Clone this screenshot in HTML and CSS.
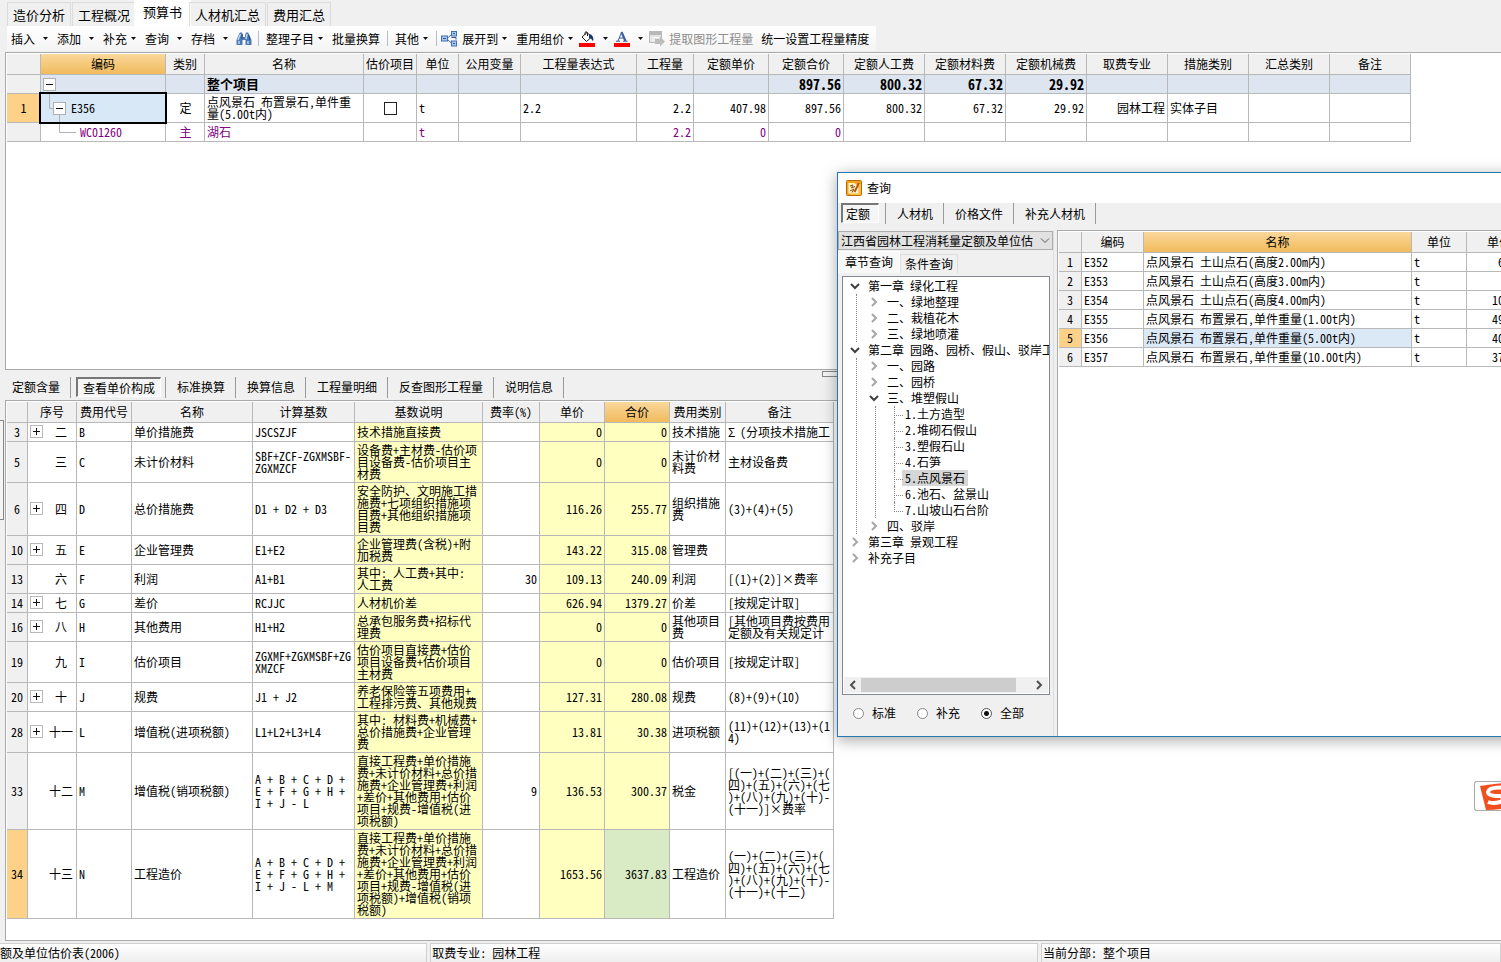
FILE: index.html
```html
<!DOCTYPE html>
<html lang="zh-CN">
<head>
<meta charset="utf-8">
<title>预算书</title>
<link rel="stylesheet" href="styles.css">
</head>
<body>
<svg class="defs" width="0" height="0" aria-hidden="true">
  <symbol id="caret" viewBox="0 0 6 3"><path d="M0 0H5L2.5 3Z" fill="#111"/></symbol>
  <symbol id="plus" viewBox="0 0 13 13"><rect x=".5" y=".5" width="12" height="12" fill="#fff" stroke="#b8b8b8"/><path d="M3 6.5H10M6.5 3V10" stroke="#111"/></symbol>
  <symbol id="open" viewBox="0 0 12 12"><path d="M2 4L6 8L10 4" fill="none" stroke="#404040" stroke-width="2"/></symbol>
  <symbol id="closed" viewBox="0 0 12 12"><path d="M4 2L8 6L4 10" fill="none" stroke="#a6a6a6" stroke-width="2"/></symbol>
</svg>

<nav class="page-tabs">
  <button>造价分析</button><button>工程概况</button><button class="active">预算书</button><button>人材机汇总</button><button>费用汇总</button>
</nav>

<div class="toolbar">
  <button class="roomy">插入<svg class="caret"><use href="#caret"/></svg></button>
  <button class="roomy">添加<svg class="caret"><use href="#caret"/></svg></button>
  <button>补充<svg class="caret"><use href="#caret"/></svg></button>
  <button class="roomy">查询<svg class="caret"><use href="#caret"/></svg></button>
  <button class="roomy">存档<svg class="caret"><use href="#caret"/></svg></button>
  <button class="find" aria-label="查找"><svg width="16" height="16" viewBox="0 0 16 16"><path d="M3 3L4 1.500H6L7 4V6H9V4L10 1.500H12L13 3L15.500 9V14H9.500V9H6.500V14H.5V9Z" fill="#4f79b5"/><path d="M4.500 3L2 9M11 3L10 8M3 10V13M12 10V13" stroke="#c5daf2" stroke-width="1.400"/><path d="M6 3V8M12.500 4L14 9" stroke="#234a85"/></svg></button>
  <span class="sep"></span>
  <button>整理子目<svg class="caret"><use href="#caret"/></svg></button>
  <button>批量换算</button>
  <span class="sep"></span>
  <button>其他<svg class="caret"><use href="#caret"/></svg></button>
  <span class="sep"></span>
  <button class="with-icon"><svg width="17" height="16" viewBox="0 0 17 16"><path d="M6 7.500L11 3M6 8L11 12.500" stroke="#4868a0" fill="none"/><rect x=".5" y="5" width="6" height="5" fill="#a9c9f3" stroke="#456fb3"/><rect x="10.500" y=".5" width="5" height="4.500" fill="#a9c9f3" stroke="#456fb3"/><rect x="10.500" y="10" width="5" height="5" fill="#a9c9f3" stroke="#456fb3"/><path d="M2 7.500H5M12 2.500H14M12 12.500H14M10.500 6.500H15V8.500" stroke="#2b5499" fill="none"/></svg>展开到<svg class="caret"><use href="#caret"/></svg></button>
  <button>重用组价<svg class="caret"><use href="#caret"/></svg></button>
  <button class="with-icon roomy" aria-label="填充颜色"><svg width="16" height="16" viewBox="0 0 16 16"><rect y="12" width="16" height="4" fill="#f00"/><path d="M3 6L8 1.500L12.500 6L7.500 10.500Z" fill="#fff" stroke="#222"/><path d="M6 4V1.500Q7 0 8.500 1.500V5" fill="none" stroke="#222"/><path d="M10 3Q15.500 4 14 10.500Q12.500 7 10 7Z" fill="#14366f"/></svg><svg class="caret"><use href="#caret"/></svg></button>
  <button class="with-icon roomy" aria-label="字体颜色"><svg width="16" height="16" viewBox="0 0 16 16"><rect y="12" width="16" height="4" fill="#f00"/><path d="M4 10L7.500 1.500" stroke="#3c5d9b" fill="none"/><path d="M7.500 1L11.500 10" stroke="#3c5d9b" stroke-width="2.200" fill="none"/><path d="M5 7H10M2 10.200H6M9 10.200H13.500" stroke="#3c5d9b" fill="none"/></svg><svg class="caret"><use href="#caret"/></svg></button>
  <button class="with-icon" disabled><svg width="16" height="16" viewBox="0 0 16 16"><rect x=".5" y=".5" width="12" height="11" fill="#e4e4e4" stroke="#bbb"/><rect width="13" height="4" fill="#b9b9b9"/><path d="M3 6.500H10M3 9H7" stroke="#fff"/><path d="M6 8H11V5.500L16 10.500L11 15.500V13H6Z" fill="#bdbdbd"/></svg>提取图形工程量</button>
  <button>统一设置工程量精度</button>
</div>

<main>
<section class="panel budget">
<table class="grid">
  <colgroup><col class="w34"><col class="w125"><col class="w39"><col class="w159"><col class="w53"><col class="w42"><col class="w62"><col class="w116"><col class="w57"><col class="w75"><col class="w75"><col class="w81"><col class="w81"><col class="w81"><col class="w81"><col class="w81"><col class="w81"><col class="w81"></colgroup>
  <thead><tr><th></th><th class="hot">编码</th><th>类别</th><th>名称</th><th>估价项目</th><th>单位</th><th>公用变量</th><th>工程量表达式</th><th>工程量</th><th>定额单价</th><th>定额合价</th><th>定额人工费</th><th>定额材料费</th><th>定额机械费</th><th>取费专业</th><th>措施类别</th><th>汇总类别</th><th>备注</th></tr></thead>
  <tbody>
  <tr class="total"><th></th><td class="branch"><div><svg width="26" height="18" viewBox="0 0 26 18"><rect x="2.500" y="3.500" width="12" height="12" fill="#fff" stroke="#b0b0b0"/><path d="M5 9.500H12" stroke="#111"/></svg></div></td><td></td><td class="label">整个项目</td><td></td><td></td><td></td><td></td><td></td><td></td><td class="num">897.56</td><td class="num">800.32</td><td class="num">67.32</td><td class="num">29.92</td><td></td><td></td><td></td><td></td></tr>
  <tr class="tall"><th class="hot-row">1</th><td class="branch current"><div><svg width="26" height="28" viewBox="0 0 26 28"><path d="M8.500 0V14.500H12M18.500 20V28" fill="none" stroke="#b0b0b0"/><rect x="12.500" y="8.500" width="12" height="12" fill="#fff" stroke="#b0b0b0"/><path d="M15 14.500H22" stroke="#111"/></svg>E356</div></td><td class="mid">定</td><td>点风景石 布置景石,单件重<br>量(5.00t内)</td><td class="mid"><input type="checkbox" aria-label="估价项目"></td><td>t</td><td></td><td>2.2</td><td class="num">2.2</td><td class="num">407.98</td><td class="num">897.56</td><td class="num">800.32</td><td class="num">67.32</td><td class="num">29.92</td><td class="num">园林工程</td><td>实体子目</td><td></td><td></td></tr>
  <tr class="material"><th></th><td class="branch"><div><svg width="35" height="18" viewBox="0 0 35 18"><path d="M18.500 0V9.500H35" fill="none" stroke="#b0b0b0"/></svg>WC01260</div></td><td class="mid">主</td><td>湖石</td><td></td><td>t</td><td></td><td></td><td class="num">2.2</td><td class="num">0</td><td class="num">0</td><td></td><td></td><td></td><td></td><td></td><td></td><td></td></tr>
  </tbody>
</table>
</section>

<div class="splitter"><span></span></div>

<nav class="flat-tabs">
  <span><button>定额含量</button></span><span class="pressed"><button>查看单价构成</button></span><span><button>标准换算</button></span><span><button>换算信息</button></span><span><button>工程量明细</button></span><span><button>反查图形工程量</button></span><span><button>说明信息</button></span>
</nav>

<section class="panel detail">
<table class="grid">
  <colgroup><col class="w21"><col class="w49"><col class="w55"><col class="w121"><col class="w102"><col class="w128"><col class="w57"><col class="w65"><col class="w65"><col class="w56"><col class="w108"></colgroup>
  <thead><tr><th></th><th>序号</th><th>费用代号</th><th>名称</th><th>计算基数</th><th>基数说明</th><th>费率(%)</th><th>单价</th><th class="hot">合价</th><th>费用类别</th><th>备注</th></tr></thead>
  <tbody>
  <tr><th>3</th><td class="seq"><div><svg class="plus"><use href="#plus"/></svg><b>二</b></div></td><td>B</td><td>单价措施费</td><td>JSCSZJF</td><td class="calc">技术措施直接费</td><td></td><td class="num calc">0</td><td class="num calc">0</td><td>技术措施</td><td><span class="full">Σ</span>(分项技术措施工</td></tr>
  <tr><th>5</th><td class="seq"><div><b>三</b></div></td><td>C</td><td>未计价材料</td><td>SBF+ZCF-ZGXMSBF-<br>ZGXMZCF</td><td class="calc">设备费+主材费-估价项<br>目设备费-估价项目主<br>材费</td><td></td><td class="num calc">0</td><td class="num calc">0</td><td>未计价材<br>料费</td><td>主材设备费</td></tr>
  <tr><th>6</th><td class="seq"><div><svg class="plus"><use href="#plus"/></svg><b>四</b></div></td><td>D</td><td>总价措施费</td><td>D1 + D2 + D3</td><td class="calc">安全防护、文明施工措<br>施费+七项组织措施项<br>目费+其他组织措施项<br>目费</td><td></td><td class="num calc">116.26</td><td class="num calc">255.77</td><td>组织措施<br>费</td><td>(3)+(4)+(5)</td></tr>
  <tr><th>10</th><td class="seq"><div><svg class="plus"><use href="#plus"/></svg><b>五</b></div></td><td>E</td><td>企业管理费</td><td>E1+E2</td><td class="calc">企业管理费(含税)+附<br>加税费</td><td></td><td class="num calc">143.22</td><td class="num calc">315.08</td><td>管理费</td><td></td></tr>
  <tr><th>13</th><td class="seq"><div><b>六</b></div></td><td>F</td><td>利润</td><td>A1+B1</td><td class="calc">其中: 人工费+其中:<br>人工费</td><td class="num">30</td><td class="num calc">109.13</td><td class="num calc">240.09</td><td>利润</td><td>[(1)+(2)]×费率</td></tr>
  <tr><th>14</th><td class="seq"><div><svg class="plus"><use href="#plus"/></svg><b>七</b></div></td><td>G</td><td>差价</td><td>RCJJC</td><td class="calc">人材机价差</td><td></td><td class="num calc">626.94</td><td class="num calc">1379.27</td><td>价差</td><td>[按规定计取]</td></tr>
  <tr><th>16</th><td class="seq"><div><svg class="plus"><use href="#plus"/></svg><b>八</b></div></td><td>H</td><td>其他费用</td><td>H1+H2</td><td class="calc">总承包服务费+招标代<br>理费</td><td></td><td class="num calc">0</td><td class="num calc">0</td><td>其他项目<br>费</td><td>[其他项目费按费用<br>定额及有关规定计</td></tr>
  <tr><th>19</th><td class="seq"><div><b>九</b></div></td><td>I</td><td>估价项目</td><td>ZGXMF+ZGXMSBF+ZG<br>XMZCF</td><td class="calc">估价项目直接费+估价<br>项目设备费+估价项目<br>主材费</td><td></td><td class="num calc">0</td><td class="num calc">0</td><td>估价项目</td><td>[按规定计取]</td></tr>
  <tr><th>20</th><td class="seq"><div><svg class="plus"><use href="#plus"/></svg><b>十</b></div></td><td>J</td><td>规费</td><td>J1 + J2</td><td class="calc">养老保险等五项费用+<br>工程排污费、其他规费</td><td></td><td class="num calc">127.31</td><td class="num calc">280.08</td><td>规费</td><td>(8)+(9)+(10)</td></tr>
  <tr><th>28</th><td class="seq two"><div><svg class="plus"><use href="#plus"/></svg><b>十一</b></div></td><td>L</td><td>增值税(进项税额)</td><td>L1+L2+L3+L4</td><td class="calc">其中: 材料费+机械费+<br>总价措施费+企业管理<br>费</td><td></td><td class="num calc">13.81</td><td class="num calc">30.38</td><td>进项税额</td><td>(11)+(12)+(13)+(1<br>4)</td></tr>
  <tr><th>33</th><td class="seq two"><div><b>十二</b></div></td><td>M</td><td>增值税(销项税额)</td><td>A + B + C + D +<br>E + F + G + H +<br>I + J - L</td><td class="calc">直接工程费+单价措施<br>费+未计价材料+总价措<br>施费+企业管理费+利润<br>+差价+其他费用+估价<br>项目+规费-增值税(进<br>项税额)</td><td class="num">9</td><td class="num calc">136.53</td><td class="num calc">300.37</td><td>税金</td><td>[(一)+(二)+(三)+(<br>四)+(五)+(六)+(七<br>)+(八)+(九)+(十)-<br>(十一)]×费率</td></tr>
  <tr><th class="hot-row">34</th><td class="seq two"><div><b>十三</b></div></td><td>N</td><td>工程造价</td><td>A + B + C + D +<br>E + F + G + H +<br>I + J - L + M</td><td class="calc">直接工程费+单价措施<br>费+未计价材料+总价措<br>施费+企业管理费+利润<br>+差价+其他费用+估价<br>项目+规费-增值税(进<br>项税额)+增值税(销项<br>税额)</td><td></td><td class="num calc">1653.56</td><td class="num picked">3637.83</td><td>工程造价</td><td>(一)+(二)+(三)+(<br>四)+(五)+(六)+(七<br>)+(八)+(九)+(十)-<br>(十一)+(十二)</td></tr>
  </tbody>
</table>
</section>
</main>

<footer class="status"><span>额及单位估价表(2006)</span><span>取费专业: 园林工程</span><span>当前分部: 整个项目</span></footer>

<div class="side-grip"></div>

<section class="dialog" role="dialog" aria-label="查询">
  <header><svg width="16" height="16" viewBox="0 0 16 16"><rect x=".5" y=".5" width="15" height="15" rx="1" fill="#f3a31c" stroke="#b5690b"/><path d="M2.500 3H8.500L12.500 6.500V13.500H2.500Z" fill="#fff4c9"/><path d="M4 6L7 5L5.500 8L9 6.500M4 11L8 9L6 12.500" stroke="#8b4b08" fill="none"/><path d="M8.500 12L13 3" stroke="#b6561a" stroke-width="2"/><path d="M14 4V14H4" stroke="#ffd966" fill="none"/></svg>查询</header>
  <nav class="flat-tabs">
    <span class="pressed"><button>定额</button></span><span><button>人材机</button></span><span><button>价格文件</button></span><span><button>补充人材机</button></span>
  </nav>
  <div class="dialog-body">
    <div class="finder">
      <div class="combo"><select aria-label="定额库"><option>江西省园林工程消耗量定额及单位估</option></select><svg width="10" height="6" viewBox="0 0 10 6"><path d="M1 .5L5 4.500L9 .5" fill="none" stroke="#555"/></svg></div>
      <nav class="page-tabs small"><button class="active">章节查询</button><button>条件查询</button></nav>
      <div class="tree">
        <ul>
          <li><div class="row"><svg><use href="#open"/></svg><span>第一章 绿化工程</span></div>
            <ul>
              <li><div class="row"><svg><use href="#closed"/></svg><span>一、绿地整理</span></div></li>
              <li><div class="row"><svg><use href="#closed"/></svg><span>二、栽植花木</span></div></li>
              <li><div class="row"><svg><use href="#closed"/></svg><span>三、绿地喷灌</span></div></li>
            </ul></li>
          <li><div class="row"><svg><use href="#open"/></svg><span>第二章 园路、园桥、假山、驳岸工程</span></div>
            <ul>
              <li><div class="row"><svg><use href="#closed"/></svg><span>一、园路</span></div></li>
              <li><div class="row"><svg><use href="#closed"/></svg><span>二、园桥</span></div></li>
              <li><div class="row"><svg><use href="#open"/></svg><span>三、堆塑假山</span></div>
                <ul>
                  <li class="leaf"><span>1.土方造型</span></li>
                  <li class="leaf"><span>2.堆砌石假山</span></li>
                  <li class="leaf"><span>3.塑假石山</span></li>
                  <li class="leaf"><span>4.石笋</span></li>
                  <li class="leaf"><span class="chosen">5.点风景石</span></li>
                  <li class="leaf"><span>6.池石、盆景山</span></li>
                  <li class="leaf"><span>7.山坡山石台阶</span></li>
                </ul></li>
              <li><div class="row"><svg><use href="#closed"/></svg><span>四、驳岸</span></div></li>
            </ul></li>
          <li><div class="row"><svg><use href="#closed"/></svg><span>第三章 景观工程</span></div></li>
          <li><div class="row"><svg><use href="#closed"/></svg><span>补充子目</span></div></li>
        </ul>
        <div class="scroll"><svg width="12" height="12" viewBox="0 0 12 12"><path d="M8 2L4 6L8 10" fill="none" stroke="#505050" stroke-width="2"/></svg><i></i><svg width="12" height="12" viewBox="0 0 12 12"><path d="M4 2L8 6L4 10" fill="none" stroke="#505050" stroke-width="2"/></svg></div>
      </div>
      <div class="radios">
        <label><input type="radio" name="scope">标准</label><label><input type="radio" name="scope">补充</label><label><input type="radio" name="scope" checked>全部</label>
      </div>
    </div>
    <div class="panel results">
      <table class="grid">
        <colgroup><col class="w23"><col class="w62"><col class="w268"><col class="w55"><col class="w65"></colgroup>
        <thead><tr><th></th><th>编码</th><th class="hot">名称</th><th>单位</th><th>单价</th></tr></thead>
        <tbody>
        <tr><th>1</th><td>E352</td><td>点风景石 土山点石(高度2.00m内)</td><td>t</td><td class="price">&nbsp;6</td></tr>
        <tr><th>2</th><td>E353</td><td>点风景石 土山点石(高度3.00m内)</td><td>t</td><td></td></tr>
        <tr><th>3</th><td>E354</td><td>点风景石 土山点石(高度4.00m内)</td><td>t</td><td class="price">10</td></tr>
        <tr><th>4</th><td>E355</td><td>点风景石 布置景石,单件重量(1.00t内)</td><td>t</td><td class="price">49</td></tr>
        <tr><th class="hot-row">5</th><td>E356</td><td class="selected">点风景石 布置景石,单件重量(5.00t内)</td><td>t</td><td class="price">40</td></tr>
        <tr><th>6</th><td>E357</td><td>点风景石 布置景石,单件重量(10.00t内)</td><td>t</td><td class="price">37</td></tr>
        </tbody>
      </table>
    </div>
  </div>
</section>

<div class="ime"><svg width="40" height="28" viewBox="0 0 40 28"><path d="M5 4Q20 2 36 0L40 24Q25 28 11 28Z" fill="#f0501e"/><path d="M33 6Q14 4 13 10Q13 14 25 14Q31 17 25 20Q18 22 13 20" fill="none" stroke="#fff" stroke-width="4"/></svg></div>
</body>
</html>
```

FILE: styles.css
```css
* { box-sizing: border-box; }
body {
  margin: 0;
  height: 100vh;
  overflow: hidden;
  display: flex;
  flex-direction: column;
  background: #f0f0f0;
  color: #000;
  font: 12px/12px "Noto Sans Mono CJK SC", "Noto Sans CJK SC", sans-serif;
}
button, select, input { font: inherit; color: inherit; margin: 0; }
button { border: 0; background: none; padding: 0; white-space: nowrap; }
.defs { position: absolute; }

.page-tabs { display: flex; align-items: flex-end; height: 26px; padding: 0 0 0 7px; flex: none; }
.page-tabs button {
  height: 24px;
  padding: 0 5px;
  border: 1px solid #dcdcdc;
  border-bottom: 0;
  font-size: 13px;
  margin-right: 1px;
}
.page-tabs .active { height: 26px; margin: 0 -2px 0 -3px; padding: 0 8px 4px; background: #fff; border-color: #fff; }
.page-tabs.small { height: 22px; padding: 0; margin-bottom: 3px; }
.page-tabs.small button { height: 19px; padding: 0 4px; font-size: 12px; margin: 0; }
.page-tabs.small .active { height: 22px; padding: 0 6px 2px; background: #f8f8f8; }

.toolbar {
  display: flex;
  align-items: center;
  align-self: flex-start;
  height: 25px;
  margin-left: 7px;
  padding-right: 3px;
  background: linear-gradient(#fff, #f4f4f4);
  font-family: "Noto Sans CJK SC", sans-serif;
  flex: none;
}
.toolbar button { display: flex; align-items: center; gap: 4px; height: 24px; padding: 0 4px; }
.toolbar .roomy { gap: 8px; }
.toolbar .find { padding: 0 3px; }
.toolbar .with-icon { padding-left: 1px; }
.toolbar button:disabled { color: #8c8c8c; }
.caret { width: 6px; height: 3px; }
.sep { width: 1px; height: 15px; margin: 0 3px; background: #b5bfcc; }

main { flex: 1; min-height: 0; display: flex; flex-direction: column; padding: 1px 0 2px 5px; }
.panel { background: #fff; border: 1px solid #a9a9a9; border-right: 0; padding: 1px 0 0 1px; overflow: hidden; }
.budget { flex: 369; min-height: 0; }
.detail { flex: 631; min-height: 0; }
.splitter { height: 7px; flex: none; padding: 1px 0 0 817px; }
.splitter span { display: block; width: 18px; height: 6px; border: 1px solid #888; background: #f4f4f4; }

.grid { border-collapse: separate; border-spacing: 0; table-layout: fixed; width: 0; }
.grid th, .grid td {
  height: 19px;
  padding: 2px 1px 2px 2px;
  border: solid #b8b8b8;
  border-width: 0 1px 1px 0;
  text-align: left;
  vertical-align: middle;
  white-space: nowrap;
  overflow: hidden;
}
.grid th { background: #f0f0f0; font-weight: 400; text-align: center; padding: 0; }
.grid thead th { height: 21px; }
.grid .hot { background: linear-gradient(#fad79b, #f1bb5c); }
.grid .hot-row { background: #fed189; }
.grid .num { text-align: right; padding-right: 2px; }
.grid .mid { text-align: center; }
.grid .calc { background: #ffffc0; }
.grid .picked { background: #d8ebc4; }
.grid .selected { background: #dbe9f7; }
.grid .price { padding-left: 25px; }
.grid .tall td { height: 29px; }
.full { display: inline-block; width: 12px; }
.total td { background: #dde6f0; font-weight: 700; font-size: 14px; }
.grid .total .label { font-size: 13px; }
.material td { color: #800080; }
.grid .branch { padding: 0; }
.branch div { display: flex; align-items: center; gap: 4px; }
.branch svg, .seq svg { display: block; flex: none; }
.grid .current { position: relative; overflow: visible; background: #d8e8f7; }
.current::after { content: ""; position: absolute; inset: -2px; border: 2px solid #000; }
input[type=checkbox] { appearance: none; display: block; width: 13px; height: 13px; margin: 0 auto; border: 1px solid #222; background: #fff; }
.seq div { display: flex; align-items: center; justify-content: flex-end; padding-right: 8px; }
.seq.two div { padding-right: 2px; }
.seq b { font-weight: 400; }
.plus { width: 13px; height: 13px; margin-right: auto; }

.w21 { width: 21px; } .w23 { width: 23px; } .w34 { width: 34px; } .w39 { width: 39px; }
.w42 { width: 42px; } .w49 { width: 49px; } .w53 { width: 53px; } .w55 { width: 55px; }
.w56 { width: 56px; } .w57 { width: 57px; } .w62 { width: 62px; } .w65 { width: 65px; }
.w75 { width: 75px; } .w81 { width: 81px; } .w102 { width: 102px; } .w108 { width: 108px; }
.w116 { width: 116px; } .w121 { width: 121px; } .w125 { width: 125px; } .w128 { width: 128px; }
.w159 { width: 159px; } .w268 { width: 268px; }

.flat-tabs { display: flex; height: 23px; flex: none; padding-bottom: 2px; }
.flat-tabs span { display: flex; border-right: 1px solid #999; padding: 0 10px 0 11px; }
.flat-tabs span:first-child { padding-left: 7px; }
.flat-tabs .pressed { padding: 0 4px 0 5px; }
.flat-tabs .pressed button { height: 20px; padding: 1px 5px 0; border: 1px solid #fff; border-top: 2px solid #777; border-left: 2px solid #777; background: #f5f5f5; }

.status { height: 19px; flex: none; display: flex; gap: 3px; }
.status span { border: 1px solid #d0d0d0; border-bottom: 0; background: linear-gradient(#fff, #eee); padding: 3px 1px; }
.status span:nth-child(1) { flex: 428; border-left: 0; padding-left: 0; }
.status span:nth-child(2) { flex: 608; }
.status span:nth-child(3) { flex: 459; }
.side-grip { position: absolute; left: -1px; top: 420px; width: 5px; height: 100px; border: 1px solid #888; background: #f4f4f4; }

.dialog {
  position: absolute;
  left: 837px;
  right: -40px;
  top: 172px;
  height: 565px;
  display: flex;
  flex-direction: column;
  border: 1px solid #2678b2;
  background: #f0f0f0;
  box-shadow: 0 3px 14px rgba(0, 0, 0, .35);
}
.dialog header { display: flex; align-items: center; gap: 5px; height: 30px; padding-left: 8px; background: #fff; flex: none; }
.dialog .flat-tabs { height: 27px; padding: 0 0 6px; }
.dialog .flat-tabs .pressed { padding: 0 6px 0 3px; }
.dialog .flat-tabs .pressed button { padding: 1px 8px 0 3px; }
.dialog-body { flex: 1; min-height: 0; display: flex; }
.finder { width: 216px; flex: none; display: flex; flex-direction: column; border-right: 1px solid #ddd; padding-top: 1px; }
.combo { position: relative; }
.combo select { appearance: none; display: block; width: 100%; height: 19px; border: 1px solid #adadad; border-radius: 0; background: #e1e1e1; padding: 0 18px 0 2px; }
.combo svg { position: absolute; right: 3px; top: 7px; }
.finder .page-tabs { margin-top: 1px; }
.finder .page-tabs .active { margin: 0; }
.tree { flex: 1; min-height: 0; display: flex; flex-direction: column; margin: 0 3px 0 4px; border: 1px solid #828790; background: #fff; padding: 1px 0 1px; }
.tree ul { list-style: none; margin: 0; padding: 0; }
.tree > ul { flex: 1; min-height: 0; overflow: hidden; }
.tree li ul { margin-left: 13px; padding-left: 5px; border-left: 1px dotted #888; }
.row { display: flex; align-items: center; gap: 7px; height: 16px; padding-left: 6px; white-space: nowrap; }
.row svg { width: 12px; height: 12px; flex: none; }
.leaf { position: relative; display: flex; align-items: center; height: 16px; margin-left: 13px; padding-left: 8px; white-space: nowrap; }
.leaf::before { content: ""; position: absolute; left: 0; top: 0; width: 8px; height: 9px; border: dotted #888; border-width: 0 0 1px 1px; }
.leaf:not(:last-child)::after { content: ""; position: absolute; left: 0; top: 9px; height: 7px; border-left: 1px dotted #888; }
.leaf span { padding: 2px 3px; }
.leaf .chosen { background: #d6d6d6; }
.scroll { display: flex; align-items: center; height: 16px; margin: 0 1px; padding: 0 3px; background: #f0f0f0; gap: 2px; }
.scroll i { width: 155px; height: 14px; background: #cdcdcd; margin-right: auto; }
.radios { display: flex; align-items: center; gap: 16px; height: 41px; padding: 0 0 5px 15px; flex: none; }
.radios label { display: flex; align-items: center; gap: 8px; width: 48px; white-space: nowrap; }
.radios input { appearance: none; width: 11px; height: 11px; flex: none; border: 1px solid #888; border-radius: 50%; background: #fff; }
.radios input:checked { background: radial-gradient(circle, #111 0 2px, #fff 3px); border-color: #555; }
.results { flex: 1; min-width: 0; margin-left: 3px; border-bottom: 0; }

.ime { position: absolute; left: 1474px; right: 0; top: 781px; height: 30px; overflow: hidden; border: 1px solid #aaa; border-right: 0; border-radius: 3px 0 0 3px; background: #fff; }
.ime svg { display: block; }
```
